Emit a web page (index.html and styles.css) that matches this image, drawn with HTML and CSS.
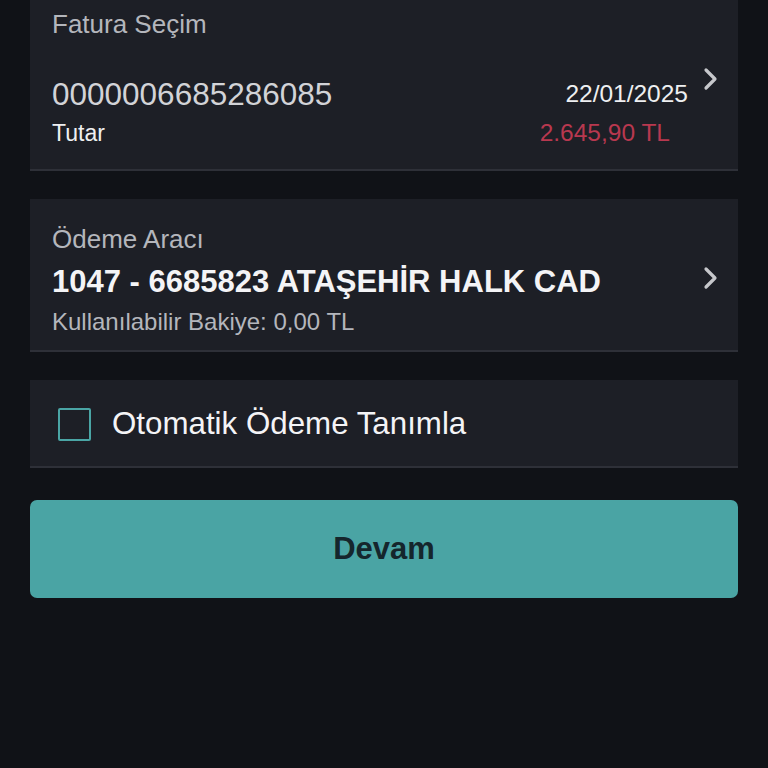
FILE: index.html
```html
<!DOCTYPE html>
<html lang="tr">
<head>
  <meta charset="UTF-8" />
  <meta name="viewport" content="width=device-width, initial-scale=1.0"/>
  <title>Fatura Ödeme</title>
  <link rel="stylesheet" href="styles.css">
</head>
<body>
  <div class="page">
    <!-- Fatura -->
    <div class="card card-invoice">
      <div class="card-body">
        <div class="label">Fatura Seçim</div>
        <div class="row row-number">
          <span class="invoice-no">0000006685286085</span>
          <span class="date">22/01/2025</span>
        </div>
        <div class="row row-amount">
          <span class="sub">Tutar</span>
          <span class="amount">2.645,90 TL</span>
        </div>
      </div>
      <svg class="chevron chevron-top" width="16" height="24" viewBox="0 0 16 24">
        <path d="M4 3 L13 12 L4 21" fill="none" stroke="#c6c7cb" stroke-width="3.2" stroke-linecap="round" stroke-linejoin="round"/>
      </svg>
    </div>

    <!-- Ödeme aracı -->
    <div class="card card-account">
      <div class="card-body">
        <div class="label">Ödeme Aracı</div>
        <div class="account">1047 - 6685823 ATAŞEHİR HALK CAD</div>
        <div class="balance">Kullanılabilir Bakiye: 0,00 TL</div>
      </div>
      <svg class="chevron" width="16" height="24" viewBox="0 0 16 24">
        <path d="M4 3 L13 12 L4 21" fill="none" stroke="#c6c7cb" stroke-width="3.2" stroke-linecap="round" stroke-linejoin="round"/>
      </svg>
    </div>

    <!-- Otomatik ödeme -->
    <label class="card card-check">
      <span class="checkbox"></span>
      <span class="check-text">Otomatik Ödeme Tanımla</span>
    </label>

    <button class="btn-next">Devam</button>
  </div>
</body>
</html>
```

FILE: styles.css
```css
html, body {
  margin: 0;
  padding: 0;
  height: 100%;
  background: #101217;
  font-family: "Liberation Sans", Arial, sans-serif;
  color: #fff;
}

.page {
  padding: 0 30px;
  display: flex;
  flex-direction: column;
}

.card {
  background: #1d1f26;
  border-bottom: 2px solid #2e3038;
  display: flex;
  padding: 0 20px 0 22px;
}

.card-body {
  flex: 1;
  display: flex;
  flex-direction: column;
}

.label {
  color: #b4b6bc;
  font-size: 26px;
  line-height: 30px;
}

.row {
  display: flex;
  justify-content: space-between;
  align-items: center;
}

/* FATURA */
.card-invoice {
  padding-top: 9px;
  padding-bottom: 22px;
}

.row-number {
  margin-top: 37px;
  line-height: 36px;
  margin-right: 14px;
}

.invoice-no {
  font-size: 31.5px;
  color: #d2d3d7;
}

.date {
  font-size: 24.5px;
  color: #eeeff1;
}

.row-amount {
  margin-top: 7px;
  line-height: 28px;
  margin-right: 32px;
}

.sub {
  font-size: 23px;
  color: #eeeff1;
}

.amount {
  font-size: 24.5px;
  color: #b8384f;
}

.chevron {
  flex: none;
  align-self: center;
  margin-top: -4px;
}

.chevron-top {
  align-self: flex-start;
  margin-top: 58px;
}

/* ODEME ARACI */
.card-account {
  margin-top: 28px;
  padding-top: 25px;
  padding-bottom: 14px;
}

.account {
  margin-top: 10px;
  font-size: 31px;
  line-height: 36px;
  font-weight: bold;
  color: #f4f4f6;
}

.balance {
  margin-top: 8px;
  font-size: 24px;
  line-height: 28px;
  color: #b4b6bc;
}

/* OTOMATIK ODEME */
.card-check {
  margin-top: 28px;
  box-sizing: border-box;
  height: 88px;
  padding-top: 2px;
  padding-left: 28px;
  align-items: center;
  cursor: pointer;
}

.checkbox {
  width: 29px;
  height: 29px;
  border: 2px solid #4aa5a5;
  border-radius: 2px;
  flex: none;
}

.check-text {
  margin-left: 21px;
  font-size: 31.3px;
  color: #f4f4f6;
}

.btn-next {
  margin-top: 32px;
  height: 98px;
  background: #4aa4a4;
  border: none;
  border-radius: 7px;
  font-family: inherit;
  font-size: 31px;
  font-weight: bold;
  color: #15262c;
  cursor: pointer;
}
```
